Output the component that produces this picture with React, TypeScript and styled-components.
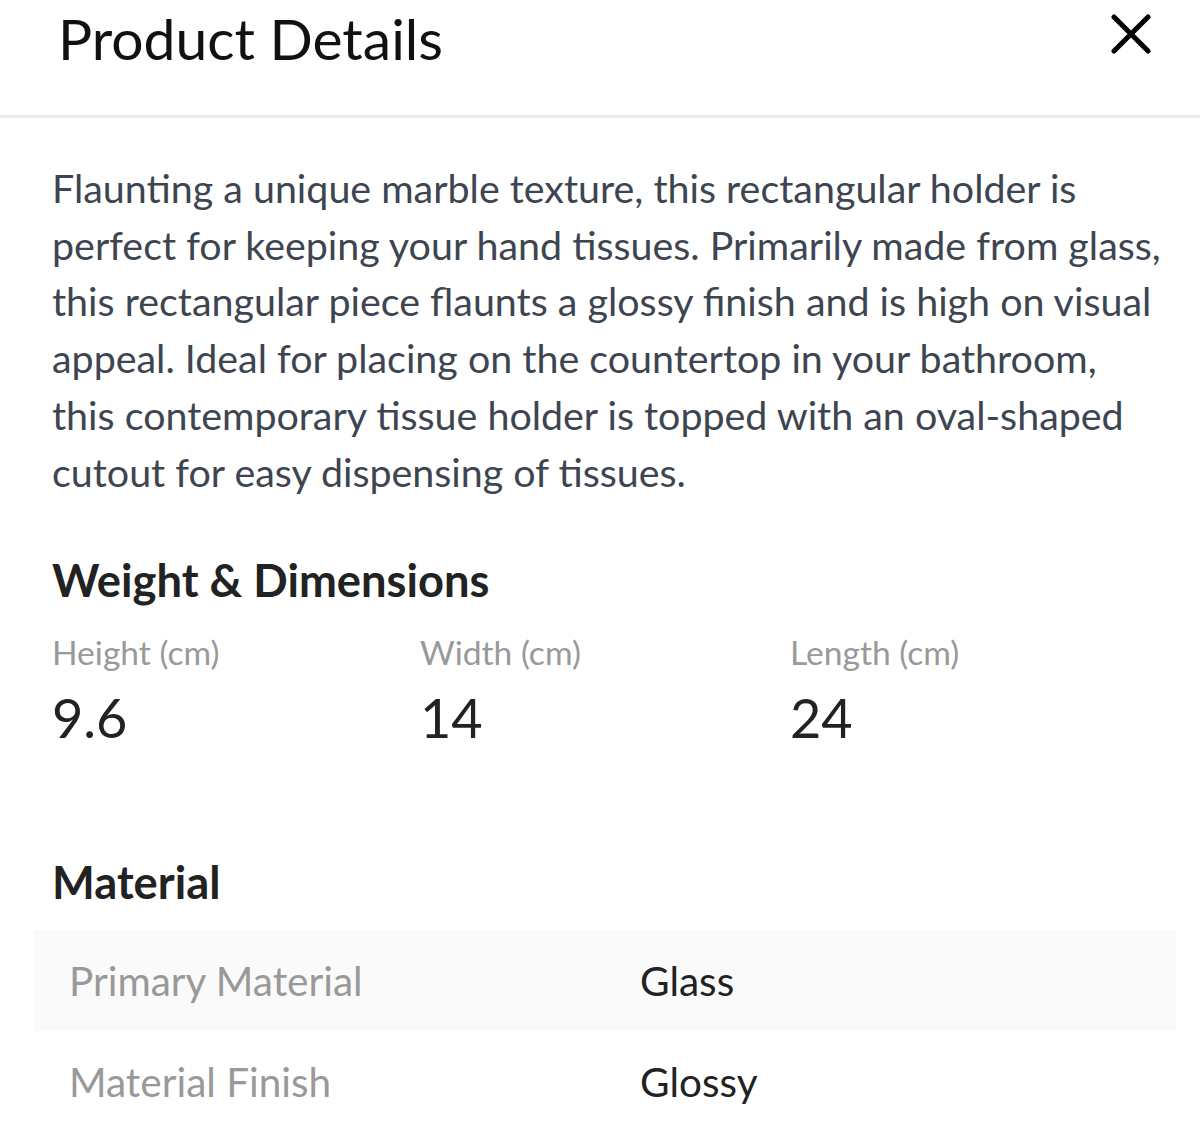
import React from "react";
import styled, { createGlobalStyle } from "styled-components";

const GlobalStyle = createGlobalStyle`
  body {
    margin: 0;
    background: #ffffff;
    font-family: Lato, "Open Sans", sans-serif;
  }
`;

const Page = styled.div`
  width: 1200px;
  min-height: 1138px;
  background: #ffffff;
`;

const Header = styled.header`
  height: 118px;
  display: flex;
  align-items: flex-start;
  justify-content: space-between;
  padding: 0 48px 0 58px;
  border-bottom: 3px solid #ececec;
  box-sizing: border-box;
`;

const Title = styled.h1`
  margin: 0;
  padding-top: 2px;
  font-size: 57px;
  font-weight: 400;
  line-height: 72px;
  color: #111111;
`;

const CloseButton = styled.button`
  margin-top: 13px;
  width: 42px;
  height: 42px;
  padding: 0;
  border: none;
  background: none;
  display: flex;
  align-items: center;
  justify-content: center;
`;

const Body = styled.main`
  padding: 0 36px 0 52px;
`;

const Description = styled.p`
  margin: 0;
  padding-top: 42px;
  font-size: 39.4px;
  line-height: 56.7px;
  color: #3d4550;
`;

const SectionTitle = styled.h2<{ $top: number }>`
  margin: ${(p) => p.$top}px 0 0;
  font-size: 45.3px;
  font-weight: 700;
  line-height: 56px;
  color: #222222;
`;

const DimGrid = styled.div`
  display: grid;
  grid-template-columns: 368px 370px 1fr;
  margin-top: 19px;
`;

const DimLabel = styled.div`
  font-size: 33.6px;
  line-height: 50px;
  color: #999999;
`;

const DimValue = styled.div`
  margin-top: 9px;
  font-size: 54px;
  line-height: 64px;
  color: #222222;
`;

const Table = styled.div`
  margin: 20px -12px 0 -18px;
`;

const Row = styled.div<{ $shaded: boolean }>`
  display: grid;
  grid-template-columns: 571px 1fr;
  align-items: center;
  height: 101px;
  padding-left: 35px;
  background: ${(p) => (p.$shaded ? "#fafafa" : "transparent")};
`;

const RowLabel = styled.span`
  font-size: 40.5px;
  color: #999999;
`;

const RowValue = styled.span`
  font-size: 40.5px;
  color: #222222;
`;

const dims = [
  { label: "Height (cm)", value: "9.6" },
  { label: "Width (cm)", value: "14" },
  { label: "Length (cm)", value: "24" },
];

const materials = [
  { label: "Primary Material", value: "Glass" },
  { label: "Material Finish", value: "Glossy" },
];

export default function App() {
  return (
    <Page>
      <GlobalStyle />
      <Header>
        <Title>Product Details</Title>
        <CloseButton aria-label="Close">
          <svg width="40" height="40" viewBox="0 0 40 40">
            <path
              d="M3 3 L37 37 M37 3 L3 37"
              stroke="#000"
              strokeWidth="5"
              strokeLinecap="round"
            />
          </svg>
        </CloseButton>
      </Header>
      <Body>
        <Description>
          Flaunting a unique marble texture, this rectangular holder is perfect
          for keeping your hand tissues. Primarily made from glass, this
          rectangular piece flaunts a glossy finish and is high on visual
          appeal. Ideal for placing on the countertop in your bathroom, this
          contemporary tissue holder is topped with an oval-shaped cutout for
          easy dispensing of tissues.
        </Description>
        <SectionTitle $top={52}>Weight &amp; Dimensions</SectionTitle>
        <DimGrid>
          {dims.map((d) => (
            <div key={d.label}>
              <DimLabel>{d.label}</DimLabel>
              <DimValue>{d.value}</DimValue>
            </div>
          ))}
        </DimGrid>
        <SectionTitle $top={104}>Material</SectionTitle>
        <Table>
          {materials.map((m, i) => (
            <Row key={m.label} $shaded={i === 0}>
              <RowLabel>{m.label}</RowLabel>
              <RowValue>{m.value}</RowValue>
            </Row>
          ))}
        </Table>
      </Body>
    </Page>
  );
}
